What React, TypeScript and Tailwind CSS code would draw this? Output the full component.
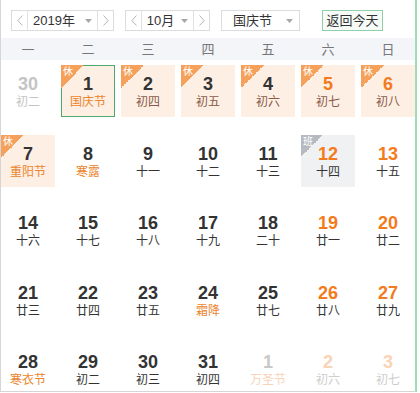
import React from 'react';

type Day = {
  n: number;
  lunar: string;
  kind?: 'prev' | 'next';
  weekend?: boolean;
  festival?: boolean;
  rest?: boolean;
  work?: boolean;
  today?: boolean;
};

const WEEK = ['一', '二', '三', '四', '五', '六', '日'];

const DAYS: Day[] = [
  { n: 30, lunar: '初二', kind: 'prev' },
  { n: 1, lunar: '国庆节', festival: true, rest: true, today: true },
  { n: 2, lunar: '初四', rest: true },
  { n: 3, lunar: '初五', rest: true },
  { n: 4, lunar: '初六', rest: true },
  { n: 5, lunar: '初七', rest: true, weekend: true },
  { n: 6, lunar: '初八', rest: true, weekend: true },

  { n: 7, lunar: '重阳节', festival: true, rest: true },
  { n: 8, lunar: '寒露', festival: true },
  { n: 9, lunar: '十一' },
  { n: 10, lunar: '十二' },
  { n: 11, lunar: '十三' },
  { n: 12, lunar: '十四', work: true, weekend: true },
  { n: 13, lunar: '十五', weekend: true },

  { n: 14, lunar: '十六' },
  { n: 15, lunar: '十七' },
  { n: 16, lunar: '十八' },
  { n: 17, lunar: '十九' },
  { n: 18, lunar: '二十' },
  { n: 19, lunar: '廿一', weekend: true },
  { n: 20, lunar: '廿二', weekend: true },

  { n: 21, lunar: '廿三' },
  { n: 22, lunar: '廿四' },
  { n: 23, lunar: '廿五' },
  { n: 24, lunar: '霜降', festival: true },
  { n: 25, lunar: '廿七' },
  { n: 26, lunar: '廿八', weekend: true },
  { n: 27, lunar: '廿九', weekend: true },

  { n: 28, lunar: '寒衣节', festival: true },
  { n: 29, lunar: '初二' },
  { n: 30, lunar: '初三' },
  { n: 31, lunar: '初四' },
  { n: 1, lunar: '万圣节', kind: 'next', festival: true },
  { n: 2, lunar: '初六', kind: 'next', weekend: true },
  { n: 3, lunar: '初七', kind: 'next', weekend: true },
];

// ─── Small drawings ──────────────────────────────────────────────────────────

function Chevron({ dir }: { dir: 'left' | 'right' }) {
  return (
    <svg width="6" height="11" viewBox="0 0 6 11" className="shrink-0">
      <path d={dir === 'left' ? 'M5.5 0.5 L0.8 5.5 L5.5 10.5' : 'M0.5 0.5 L5.2 5.5 L0.5 10.5'}
        fill="none" stroke="#b4b4b4" strokeWidth="1" />
    </svg>
  );
}

function Caret() {
  return (
    <svg width="7" height="4" viewBox="0 0 7 4" className="shrink-0">
      <path d="M0 0 L7 0 L3.5 4 Z" fill="#a8a8a8" />
    </svg>
  );
}

function Stepper({ label, mid, gap }: { label: string; mid: string; gap: string }) {
  return (
    <div className="flex h-[21px] border border-[#dcdcdc] bg-white">
      <div className="w-[16px] flex items-center justify-center border-r border-[#e2e2e2]"><Chevron dir="left" /></div>
      <div className={`${mid} flex items-center justify-center ${gap}`}>
        <span className="text-[13px] text-[#333] leading-none">{label}</span>
        <Caret />
      </div>
      <div className="w-[16px] flex items-center justify-center border-l border-[#e2e2e2]"><Chevron dir="right" /></div>
    </div>
  );
}

// ─── Day cell ────────────────────────────────────────────────────────────────

function Cell({ d }: { d: Day }) {
  const faded = !!d.kind;

  let bg = '';
  if (!faded && d.rest) bg = 'bg-[#fdefe3]';
  if (!faded && d.work) bg = 'bg-[#f0f1f3]';

  let numColor = 'text-[#333]';
  if (d.weekend) numColor = 'text-[#f37b1d]';
  if (d.kind === 'prev') numColor = 'text-[#c4c4c4]';
  if (d.kind === 'next') numColor = d.weekend ? 'text-[#f8d3b6]' : 'text-[#c8c8c8]';

  let lunarColor = d.rest ? 'text-[#8a5a48]' : 'text-[#333]';
  if (d.festival) lunarColor = 'text-[#eb8530]';
  if (d.kind === 'prev') lunarColor = 'text-[#c4c4c4]';
  if (d.kind === 'next') lunarColor = d.festival ? 'text-[#f9d4b8]' : 'text-[#cdcdcd]';

  return (
    <div className={`relative h-[52px] flex flex-col items-center pt-[8px] ${bg} ${d.today ? 'ring-1 ring-inset ring-[#4eaa6c]' : ''}`}>
      {!faded && d.rest && (
        <>
          <div className="absolute top-0 left-0 w-[23px] h-[23px] bg-[linear-gradient(135deg,#f5a15b_50%,transparent_50%)]" />
          <span className="absolute top-[2px] left-[2px] text-[10px] leading-none text-white">休</span>
        </>
      )}
      {!faded && d.work && (
        <>
          <div className="absolute top-0 left-0 w-[22px] h-[22px] bg-[linear-gradient(135deg,#b7bbc1_50%,transparent_50%)]" />
          <span className="absolute top-[2px] left-[2px] text-[10px] leading-none text-white">班</span>
        </>
      )}
      <span className={`text-[18px] font-bold leading-[22px] ${numColor}`}>{d.n}</span>
      <span className={`text-[12px] leading-[14px] ${lunarColor}`}>{d.lunar}</span>
    </div>
  );
}

// ─── Main ────────────────────────────────────────────────────────────────────

export default function App() {
  return (
    <div className="w-[420px] h-[393px] bg-white overflow-hidden font-['Liberation_Sans','Noto_Sans_CJK_SC',sans-serif]">
      <div className="w-[417px] h-[392px] border-l border-b border-[#d6d6d6] border-r-2 border-r-[#9fdcb8] overflow-hidden">

        {/* Header controls */}
        <div className="h-[38px] flex items-start pt-[10px] pl-[10px]">
          <Stepper label="2019年" mid="w-[69px]" gap="gap-[10px]" />
          <div className="ml-[11px]">
            <Stepper label="10月" mid="w-[51px]" gap="gap-[7px]" />
          </div>
          <div className="ml-[11px] w-[79px] h-[21px] border border-[#dcdcdc] flex items-center pl-[11px] pr-[6px]">
            <span className="text-[13px] text-[#333] leading-none">国庆节</span>
            <span className="ml-auto"><Caret /></span>
          </div>
          <button className="ml-[22px] w-[61px] h-[21px] border border-[#8fd0aa] bg-[#f6fbf8] text-[13px] text-[#333] leading-none flex items-center justify-center">
            返回今天
          </button>
        </div>

        {/* Weekday labels */}
        <div className="h-[22px] bg-[#f3f5f8] grid grid-cols-7 gap-x-[6px] items-center">
          {WEEK.map(w => (
            <span key={w} className="text-center text-[13px] text-[#777] leading-none">{w}</span>
          ))}
        </div>

        {/* Days */}
        <div className="mt-[5px] grid grid-cols-7 gap-x-[6px] gap-y-[17.5px]">
          {DAYS.map((d, i) => <Cell key={i} d={d} />)}
        </div>
      </div>
    </div>
  );
}
